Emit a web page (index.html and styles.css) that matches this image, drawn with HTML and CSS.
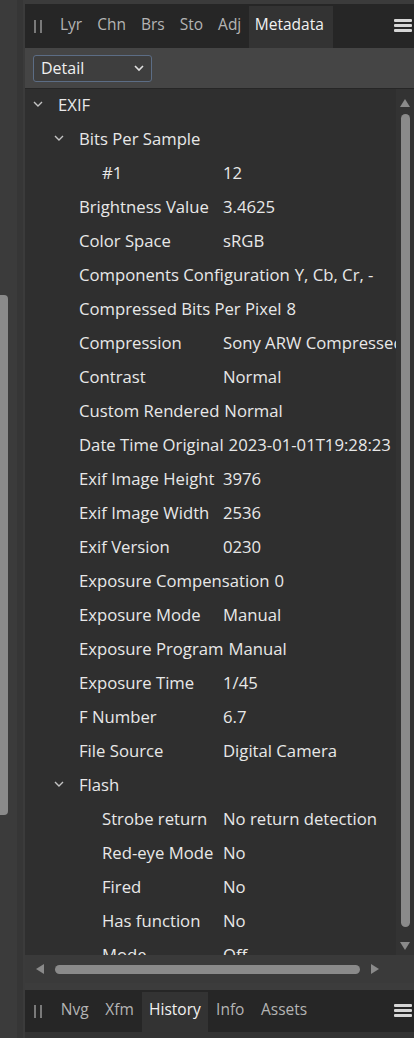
FILE: index.html
```html
<!DOCTYPE html>
<html>
<head>
<meta charset="utf-8">
<link rel="stylesheet" href="styles.css">
</head>
<body>
<div class="app">
  <div class="leftstrip">
    <div class="lthumb"></div>
    <div class="ledge"></div>
  </div>
  <div class="panel">
    <div class="topgap"></div>
    <div class="tabbar">
      <span class="grip"><i></i><i></i></span>
      <span class="tab">Lyr</span>
      <span class="tab">Chn</span>
      <span class="tab">Brs</span>
      <span class="tab">Sto</span>
      <span class="tab">Adj</span>
      <span class="tab active">Metadata</span>
      <span class="spacer"></span>
      <span class="menu"><i></i><i></i><i></i></span>
    </div>
    <div class="toolbar">
      <div class="select">
        <span>Detail</span>
        <svg width="12" height="8" viewBox="0 0 12 8"><polyline points="2,2 6,6 10,2" fill="none" stroke="#e0e0e0" stroke-width="1.6"/></svg>
      </div>
    </div>
    <div class="body">
      <div class="tree">
        <div class="row l1"><span class="chev"><svg width="10" height="6" viewBox="0 0 10 6"><polyline points="1,1 5,5 9,1" fill="none" stroke="#c4c4c4" stroke-width="1.4"/></svg></span><span class="k">EXIF</span></div>
        <div class="row l2"><span class="chev"><svg width="10" height="6" viewBox="0 0 10 6"><polyline points="1,1 5,5 9,1" fill="none" stroke="#c4c4c4" stroke-width="1.4"/></svg></span><span class="k">Bits Per Sample</span></div>
        <div class="row l3"><span class="k">#1</span><span class="v">12</span></div>
        <div class="row l2"><span class="k">Brightness Value</span><span class="v">3.4625</span></div>
        <div class="row l2"><span class="k">Color Space</span><span class="v">sRGB</span></div>
        <div class="row l2"><span class="k">Components Configuration</span><span class="v">Y, Cb, Cr, -</span></div>
        <div class="row l2"><span class="k">Compressed Bits Per Pixel</span><span class="v">8</span></div>
        <div class="row l2"><span class="k">Compression</span><span class="v">Sony ARW Compressed</span></div>
        <div class="row l2"><span class="k">Contrast</span><span class="v">Normal</span></div>
        <div class="row l2"><span class="k">Custom Rendered</span><span class="v">Normal</span></div>
        <div class="row l2"><span class="k">Date Time Original</span><span class="v">2023-01-01T19:28:23</span></div>
        <div class="row l2"><span class="k">Exif Image Height</span><span class="v">3976</span></div>
        <div class="row l2"><span class="k">Exif Image Width</span><span class="v">2536</span></div>
        <div class="row l2"><span class="k">Exif Version</span><span class="v">0230</span></div>
        <div class="row l2"><span class="k">Exposure Compensation</span><span class="v">0</span></div>
        <div class="row l2"><span class="k">Exposure Mode</span><span class="v">Manual</span></div>
        <div class="row l2"><span class="k">Exposure Program</span><span class="v">Manual</span></div>
        <div class="row l2"><span class="k">Exposure Time</span><span class="v">1/45</span></div>
        <div class="row l2"><span class="k">F Number</span><span class="v">6.7</span></div>
        <div class="row l2"><span class="k">File Source</span><span class="v">Digital Camera</span></div>
        <div class="row l2"><span class="chev"><svg width="10" height="6" viewBox="0 0 10 6"><polyline points="1,1 5,5 9,1" fill="none" stroke="#c4c4c4" stroke-width="1.4"/></svg></span><span class="k">Flash</span></div>
        <div class="row l3"><span class="k">Strobe return</span><span class="v">No return detection</span></div>
        <div class="row l3"><span class="k">Red-eye Mode</span><span class="v">No</span></div>
        <div class="row l3"><span class="k">Fired</span><span class="v">No</span></div>
        <div class="row l3"><span class="k">Has function</span><span class="v">No</span></div>
        <div class="row l3"><span class="k">Mode</span><span class="v">Off</span></div>
      </div>
      <div class="vscroll">
        <svg class="arrow" width="12" height="10" viewBox="0 0 12 10"><polygon points="6,1 11,9 1,9" fill="#8a8a8a"/></svg>
        <div class="vthumb"></div>
        <svg class="arrow" width="12" height="10" viewBox="0 0 12 10"><polygon points="1,1 11,1 6,9" fill="#8a8a8a"/></svg>
      </div>
    </div>
    <div class="hscroll">
      <svg width="10" height="12" viewBox="0 0 10 12"><polygon points="1,6 9,1 9,11" fill="#8a8a8a"/></svg>
      <div class="hthumb"></div>
      <svg width="10" height="12" viewBox="0 0 10 12"><polygon points="1,1 9,6 1,11" fill="#8a8a8a"/></svg>
    </div>
    <div class="midgap"></div>
    <div class="tabbar bottom">
      <span class="grip"><i></i><i></i></span>
      <span class="tab">Nvg</span>
      <span class="tab">Xfm</span>
      <span class="tab active">History</span>
      <span class="tab">Info</span>
      <span class="tab">Assets</span>
      <span class="spacer"></span>
      <span class="menu"><i></i><i></i><i></i></span>
    </div>
    <div class="footer"></div>
  </div>
</div>
</body>
</html>
```
FILE: styles.css
```css
html, body {
  margin: 0;
  padding: 0;
  background: #3b3b3b;
}
body {
  width: 414px;
  height: 1038px;
  overflow: hidden;
  font-family: "Open Sans", "Noto Sans", sans-serif;
  color: #e8e8e8;
}
.app {
  display: flex;
  height: 1038px;
}
.leftstrip {
  width: 25px;
  flex: none;
  display: flex;
  background: #3b3b3b;
}
.lthumb {
  width: 8px;
  height: 520px;
  margin-top: 295px;
  background: #8a8a8a;
  border-radius: 0 4px 4px 0;
}
.ledge {
  margin-left: 9px;
  width: 6px;
  background: #363636;
}
.panel {
  flex: 1;
  display: flex;
  flex-direction: column;
  min-width: 0;
}
.topgap {
  height: 4px;
  background: #3b3b3b;
}
.tabbar {
  height: 44px;
  background: #262626;
  display: flex;
  align-items: stretch;
  font-size: 15.5px;
  color: #b4b4b4;
}
.tabbar.bottom {
  height: 42px;
}
.grip {
  width: 27.5px;
  display: flex;
  align-items: center;
  gap: 4px;
  padding-left: 9px;
  box-sizing: border-box;
}
.grip i {
  width: 2px;
  height: 13px;
  background: #7a7a7a;
}
.tab {
  display: flex;
  align-items: center;
  padding: 0 7.5px 4px;
}
.tabbar.bottom .tab {
  padding-left: 8.3px;
  padding-right: 8.3px;
}
.tab.active {
  background: #333333;
  color: #f2f2f2;
  padding-left: 6px;
  padding-right: 9px;
}
.tabbar .tab.active { margin-top: 2px; padding-bottom: 6px; }
.tabbar.bottom .tab.active { padding-left: 7px; padding-right: 7px; }
.spacer { flex: 1; }
.menu {
  width: 18px;
  display: flex;
  flex-direction: column;
  justify-content: center;
  gap: 2px;
  margin-right: 2px;
  padding-bottom: 2px;
}
.menu i {
  height: 3px;
  background: #d6d6d6;
  border-radius: 1px;
}
.toolbar {
  height: 40px;
  background: #454545;
  border-bottom: 1px solid #262626;
  display: flex;
  align-items: center;
  padding-left: 8px;
}
.select {
  width: 119px;
  height: 27px;
  box-sizing: border-box;
  border: 1.5px solid #5c6d85;
  border-radius: 3px;
  background: #3e3e3e;
  display: flex;
  align-items: center;
  justify-content: space-between;
  padding: 0 6px 1px 7px;
  font-size: 16px;
  color: #f0f0f0;
}
.body {
  height: 866px;
  display: flex;
  background: #2f2f2f;
}
.tree {
  flex: 1;
  min-width: 0;
  overflow: hidden;
  font-size: 16.7px;
}
.row {
  height: 34px;
  box-sizing: border-box;
  padding-bottom: 4px;
  display: flex;
  align-items: center;
  white-space: nowrap;
}
.row.l1 { padding-left: 8px; }
.row.l2 { padding-left: 54px; }
.row.l2 .chev { margin-left: -25px; }
.row.l3 { padding-left: 77px; }
.chev {
  width: 25px;
  display: flex;
  align-items: center;
}
.row.l2 .k { min-width: 139px; margin-right: 5px; }
.row.l3 .k { min-width: 116px; margin-right: 5px; }
.vscroll {
  width: 18px;
  flex: none;
  background: #333333;
  display: flex;
  flex-direction: column;
  align-items: center;
  padding: 9px 0 4px;
  gap: 6px;
}
.vscroll .arrow { flex: none; }
.vthumb {
  flex: 1;
  width: 9px;
  background: #8a8a8a;
  border-radius: 5px;
  margin-bottom: 8px;
}
.hscroll {
  height: 28px;
  background: #3a3a3a;
  display: flex;
  align-items: center;
  padding: 0 26px 0 10px;
  gap: 10px;
}
.hthumb {
  width: 305px;
  height: 9px;
  background: #8a8a8a;
  border-radius: 5px;
}
.midgap {
  height: 7px;
  background: #3c3c3c;
}
.footer {
  flex: 1;
  background: #333333;
}
```
